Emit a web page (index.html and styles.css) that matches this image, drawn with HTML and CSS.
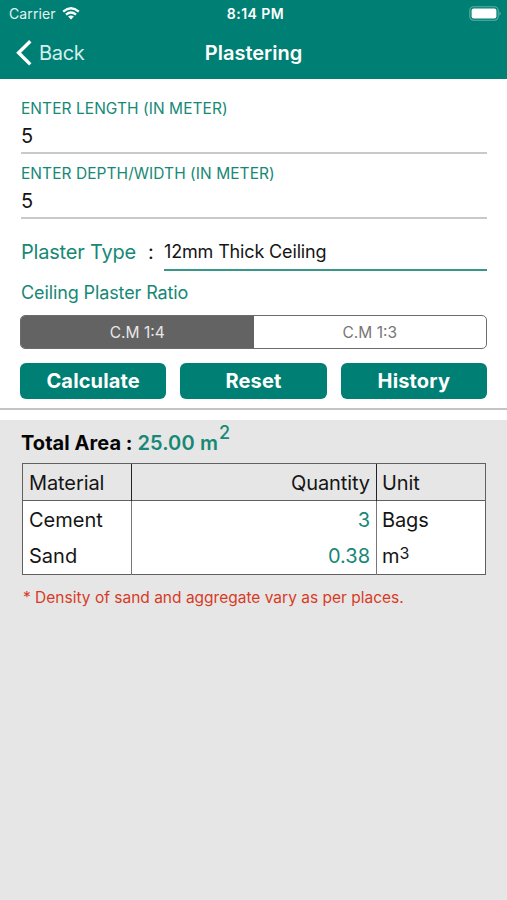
FILE: index.html
```html
<!DOCTYPE html>
<html lang="en">
<head>
<meta charset="utf-8">
<title>Plastering</title>
<link rel="stylesheet" href="styles.css">
</head>
<body>
<header class="header">
  <div class="status">
    <div class="carrier"><span>Carrier</span>
      <svg class="wifi" width="18" height="13" viewBox="0 0 18 13" fill="none" stroke="#fff" stroke-width="2.3"><path d="M1.2 4.6Q9-2 16.8 4.6M4 7.6Q9 3.4 14 7.6"/><path d="M9 12.4L6.1 9.6Q9 7.4 11.9 9.6Z" fill="#fff" stroke="none"/></svg>
    </div>
    <div class="time">8:14 PM</div>
    <svg class="battery" width="33" height="15" viewBox="0 0 33 15"><rect x=".8" y=".8" width="28.4" height="13.4" rx="3.6" fill="none" stroke="#5fada2" stroke-width="1.1"/><rect x="2.6" y="2.6" width="24.8" height="9.8" rx="2" fill="#fff"/><path d="M30.5 5.2Q32.6 7.5 30.5 9.8Z" fill="#76b8ae"/></svg>
  </div>
  <nav class="nav">
    <div class="back"><svg width="16" height="27" viewBox="0 0 16 27" fill="none" stroke="#fff" stroke-width="3.4"><path d="M14.3 1.2L2.6 12.8L14.3 24.4"/></svg><span>Back</span></div>
    <h1 class="title">Plastering</h1>
  </nav>
</header>
<main>
  <section class="form">
    <div class="field"><label>ENTER LENGTH (IN METER)</label><div class="value">5</div></div>
    <div class="field"><label>ENTER DEPTH/WIDTH (IN METER)</label><div class="value">5</div></div>
    <div class="type"><span class="type-label">Plaster Type</span><span class="colon">:</span><div class="select">12mm Thick Ceiling</div></div>
    <div class="ratio">Ceiling Plaster Ratio</div>
    <div class="segments"><div class="segment on">C.M 1:4</div><div class="segment">C.M 1:3</div></div>
    <div class="buttons"><button>Calculate</button><button>Reset</button><button>History</button></div>
  </section>
  <section class="results">
    <div class="total"><span>Total Area :</span> <span class="amount">25.00 m<sup>2</sup></span></div>
    <div class="table">
      <div class="row head"><div>Material</div><div class="qty">Quantity</div><div>Unit</div></div>
      <div class="row"><div>Cement</div><div class="qty">3</div><div>Bags</div></div>
      <div class="row"><div>Sand</div><div class="qty">0.38</div><div>m<sup>3</sup></div></div>
    </div>
    <p class="note">* Density of sand and aggregate vary as per places.</p>
  </section>
</main>
</body>
</html>
```
FILE: styles.css
```css
* { box-sizing: border-box; }
body { margin: 0; height: 900px; display: flex; flex-direction: column; font-family: Inter, "Liberation Sans", sans-serif; color: #151515; background: #fff; overflow: hidden; }
main { flex: 1; display: flex; flex-direction: column; }
.header { height: 79px; background: #008074; color: #fff; }
.status { height: 27px; display: grid; grid-template-columns: 1fr auto 1fr; align-items: center; padding: 0 5px 0 9px; }
.carrier { display: flex; align-items: center; gap: 6px; font-size: 14px; line-height: 27px; letter-spacing: .1px; color: #e2f3f0; }
.wifi { display: block; }
.time { font-size: 14px; font-weight: 600; letter-spacing: .45px; }
.battery { justify-self: end; }
.nav { height: 52px; display: grid; grid-template-columns: 1fr auto 1fr; align-items: center; padding: 0 16px; }
.back { display: flex; align-items: center; gap: 7px; font-size: 20px; letter-spacing: -.3px; color: #d6eeea; }
.title { margin: 0; font-size: 20px; font-weight: 600; line-height: 50px; }
.form { height: 341px; padding: 20px 20px 0 21px; }
.field { height: 55px; margin-bottom: 10px; border-bottom: 2px solid #c9c9c9; }
.field label { display: block; font-size: 15.5px; line-height: 20px; letter-spacing: .05px; color: #168876; }
.value { font-size: 20px; line-height: 34px; }
.type { display: flex; height: 42px; align-items: stretch; line-height: 46px; }
.type-label { width: 127px; font-size: 20px; letter-spacing: -.2px; color: #168876; }
.colon { width: 16px; font-size: 20px; }
.select { flex: 1; font-size: 18px; letter-spacing: -.15px; border-bottom: 2px solid #39978a; }
.ratio { height: 44px; line-height: 44px; font-size: 18px; letter-spacing: -.11px; color: #168876; }
.segments { height: 34px; display: flex; margin-left: -1px; border: 1px solid #6b6b6b; border-radius: 5px; overflow: hidden; }
.segment { flex: 1; text-align: center; font-size: 15.5px; line-height: 33px; color: #777; }
.segment.on { background: #636363; color: #e8e8e8; }
.buttons { display: flex; gap: 14px; margin: 14px 0 0 -1px; }
.buttons button { flex: 1; height: 36px; padding: 0; border: 0; border-radius: 6px; background: #008074; color: #fff; font: 700 20px/37px Inter, sans-serif; letter-spacing: .15px; }
.form::after { content: ""; display: block; height: 2px; margin: 9px -20px 0 -21px; background: #c4c4c4; }
.results { flex: 1; padding: 0 21px; background: #e6e6e6; }
.total { height: 43px; line-height: 47px; font-size: 20px; font-weight: 700; letter-spacing: .05px; color: #050505; }
.amount { color: #168876; font-weight: 600; letter-spacing: .12px; }
.total sup { font-size: 18px; font-weight: 500; line-height: 0; vertical-align: 11px; margin-left: 1px; }
.table { width: 464px; margin-left: 1px; border: 1px solid #606060; background: #fff; font-size: 20px; }
.row { height: 36.5px; display: grid; grid-template-columns: 108px 245px 1fr; line-height: 38px; }
.row > div { padding: 0 6px; }
.row > div + div { border-left: 1px solid #777; }
.row > div:last-child { padding-left: 5px; }
.head { background: #e6e6e6; border-bottom: 1px solid #606060; letter-spacing: -.1px; }
.head > div + div { border-color: #222; }
.row > .qty { text-align: right; }
.row:not(.head) .qty { color: #168876; }
.row:not(.head) div:last-child { letter-spacing: -.1px; }
.row sup { font-size: 16px; line-height: 0; vertical-align: 4px; }
.note { margin: 13px 0 0 2px; font-size: 15.5px; line-height: 20px; color: #d73b25; white-space: nowrap; }
```
